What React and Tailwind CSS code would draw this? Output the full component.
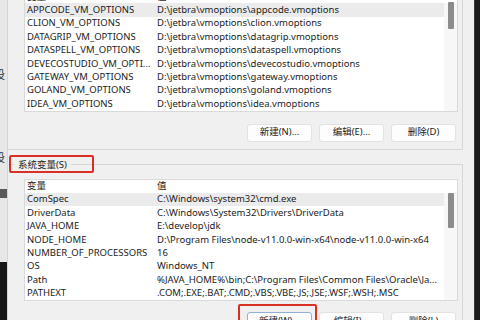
import React from "react";

const userVars = [
  ["APPCODE_VM_OPTIONS", "D:\\jetbra\\vmoptions\\appcode.vmoptions"],
  ["CLION_VM_OPTIONS", "D:\\jetbra\\vmoptions\\clion.vmoptions"],
  ["DATAGRIP_VM_OPTIONS", "D:\\jetbra\\vmoptions\\datagrip.vmoptions"],
  ["DATASPELL_VM_OPTIONS", "D:\\jetbra\\vmoptions\\dataspell.vmoptions"],
  ["DEVECOSTUDIO_VM_OPTI...", "D:\\jetbra\\vmoptions\\devecostudio.vmoptions"],
  ["GATEWAY_VM_OPTIONS", "D:\\jetbra\\vmoptions\\gateway.vmoptions"],
  ["GOLAND_VM_OPTIONS", "D:\\jetbra\\vmoptions\\goland.vmoptions"],
  ["IDEA_VM_OPTIONS", "D:\\jetbra\\vmoptions\\idea.vmoptions"],
];

const sysVars = [
  ["ComSpec", "C:\\Windows\\system32\\cmd.exe"],
  ["DriverData", "C:\\Windows\\System32\\Drivers\\DriverData"],
  ["JAVA_HOME", "E:\\develop\\jdk"],
  ["NODE_HOME", "D:\\Program Files\\node-v11.0.0-win-x64\\node-v11.0.0-win-x64"],
  ["NUMBER_OF_PROCESSORS", "16"],
  ["OS", "Windows_NT"],
  ["Path", "%JAVA_HOME%\\bin;C:\\Program Files\\Common Files\\Oracle\\Ja..."],
  ["PATHEXT", ".COM;.EXE;.BAT;.CMD;.VBS;.VBE;.JS;.JSE;.WSF;.WSH;.MSC"],
];

function Row({ name, value, selected }) {
  return (
    <div
      className={
        "flex h-[13.4px] items-center whitespace-nowrap overflow-hidden " +
        (selected ? "bg-[#ebebeb]" : "")
      }
    >
      <div className="w-[130px] shrink-0 pl-[2px] overflow-hidden">{name}</div>
      <div className="pl-[2px]">{value}</div>
    </div>
  );
}

function VarList({ data, thumbH, thumbMt }) {
  return (
    <div className="ml-[16px] w-[434px] bg-white border border-[#d9d9d9]">
      <div className="flex h-[13.4px] items-center whitespace-nowrap">
        <div className="w-[130px] shrink-0 pl-[2px]">变量</div>
        <div className="pl-[2px]">值</div>
      </div>
      <div className="flex">
        <div className="flex-1 min-w-0 flex flex-col">
          {data.map(([n, v], i) => (
            <Row key={n} name={n} value={v} selected={i === 0} />
          ))}
        </div>
        <div className="w-[13px] shrink-0 bg-[#f7f7f7] flex justify-center">
          <div
            className={"w-[6px] bg-[#8c8c8c] rounded-[1px] " + thumbH + " " + thumbMt}
          />
        </div>
      </div>
    </div>
  );
}

function Btn({ children, def }) {
  return (
    <div
      className={
        "w-[65px] h-[18px] flex items-center justify-center rounded-[3px] bg-[#fdfdfd] border " +
        (def ? "border-[#8fb0d4]" : "border-[#e2e2e2]")
      }
    >
      {children}
    </div>
  );
}

export default function App() {
  return (
    <div className="w-[480px] h-[320px] overflow-hidden flex font-['Noto_Sans','Noto_Sans_CJK_SC',sans-serif] text-[9.5px] text-[#1c1c1c]">
      {/* left background window fragment */}
      <div className="w-[8px] shrink-0 flex flex-col border-r border-[#d4d4d4]">
        <div className="h-[262px] bg-[#e7e7e7] flex flex-col overflow-hidden text-[#333]">
          <div className="mt-[68px] -ml-[6px] leading-[14px] text-[11px]">设</div>
          <div className="mt-[69px] -ml-[6px] leading-[14px] text-[11px]">设</div>
          <div className="mt-[24px] h-[9px] w-[7px] bg-[#5a5a5a]" />
        </div>
        <div className="flex-1 bg-[#161616]" />
      </div>

      {/* dialog */}
      <div className="w-[466px] shrink-0 bg-[#f0f0f0] flex flex-col">
        {/* user variables group (scrolled, top cut) */}
        <div className="-mt-[11px] w-[455px] border-r border-b border-[#d6d6d6] pb-[7px]">
          <VarList data={userVars} thumbH="h-[27px]" thumbMt="-mt-[1px]" />
          <div className="mt-[12px] flex justify-end gap-[7px] pr-[6px]">
            <Btn>新建(N)...</Btn>
            <Btn>编辑(E)...</Btn>
            <Btn>删除(D)</Btn>
          </div>
        </div>

        {/* system variables group */}
        <fieldset className="mt-[8px] w-[455px] border-t border-r border-[#d6d6d6] p-0 m-0 min-w-0">
          <legend className="ml-[6px] px-[4px] leading-[14px] relative">
            系统变量(S)
            <span className="absolute -left-[5px] -top-[3px] w-[85px] h-[18px] border-2 border-[#d93025] rounded-[2px]" />
          </legend>
          <div className="mt-[7px]">
            <VarList data={sysVars} thumbH="h-[35px]" thumbMt="mt-0" />
          </div>
          <div className="mt-[11px] flex justify-end gap-[7px] pr-[6px]">
            <div className="relative">
              <Btn def>新建(W)...</Btn>
              <span className="absolute -left-[9px] -top-[8px] w-[79px] h-[40px] border-2 border-[#d93025] rounded-[2px]" />
            </div>
            <Btn>编辑(I)...</Btn>
            <Btn>删除(L)</Btn>
          </div>
        </fieldset>
      </div>

      {/* right dark background */}
      <div className="flex-1 bg-[#1b1b1b] border-l border-[#3a3a3a]" />
    </div>
  );
}
